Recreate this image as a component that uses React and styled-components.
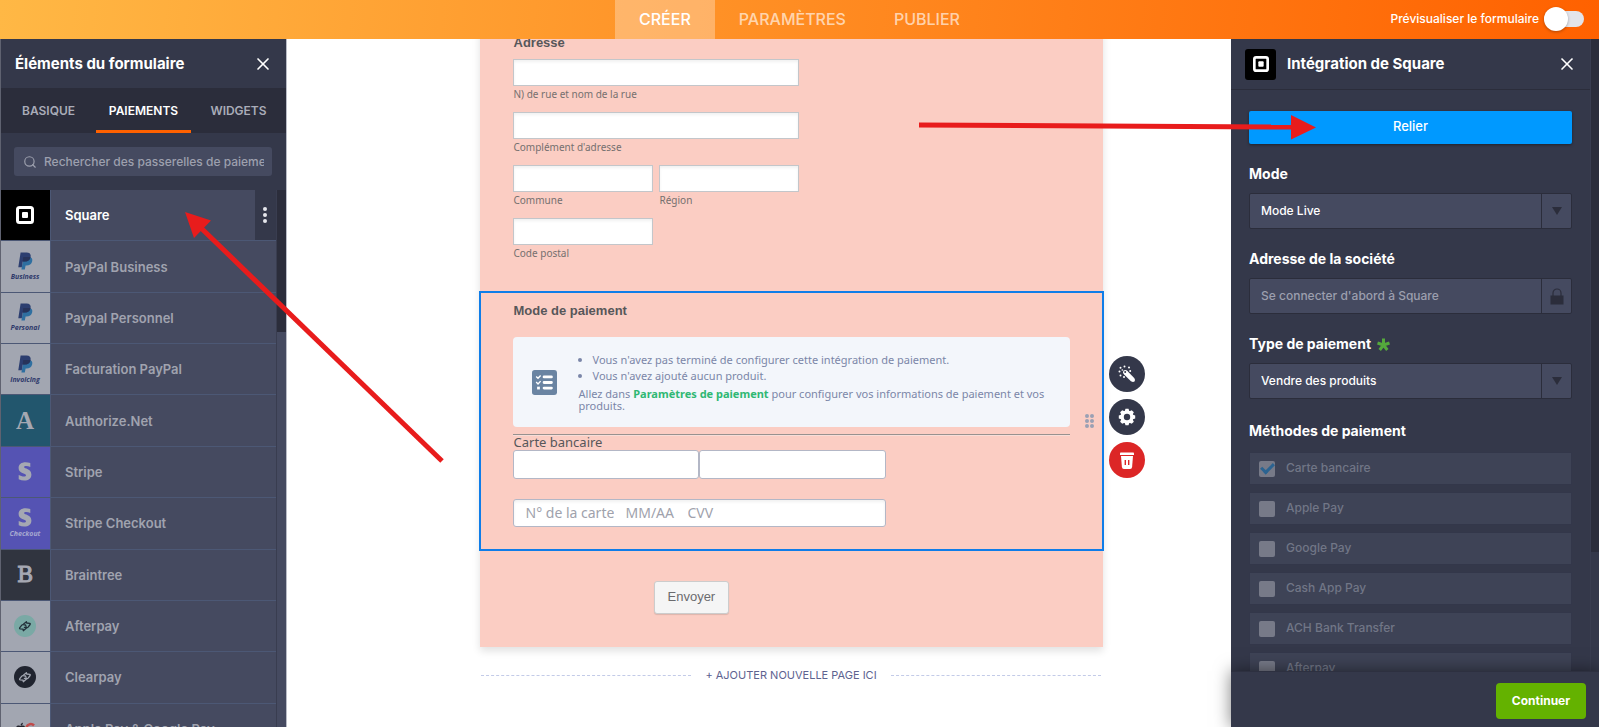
import React from 'react';
import styled, { createGlobalStyle, css } from 'styled-components';
import { FaApple } from 'react-icons/fa';
import { Search, X } from 'lucide-react';

const GlobalStyle = createGlobalStyle`
  * {
    box-sizing: border-box;
  }

  body {
    margin: 0;
    background: #fff;
    font-family: Inter, "Liberation Sans", sans-serif;
  }

  button, input, select {
    font-family: inherit;
    margin: 0;
  }
`;

const Page = styled.div`
  position: relative;
  height: 100vh;
  display: flex;
  flex-direction: column;
  overflow: hidden;
`;

/* top bar */

const TopBar = styled.header`
  height: 39px;
  flex: none;
  display: grid;
  grid-template-columns: 1fr auto 1fr;
  background: linear-gradient(95deg, #ffb845, #ff6100);
`;

const TopNav = styled.nav`
  grid-column: 2;
  display: flex;
`;

const TopLink = styled.a`
  display: flex;
  align-items: center;
  padding: 0 24px 2px;
  font-size: 16px;
  font-weight: 500;
  text-decoration: none;
  color: ${props => (props.$active ? '#fff' : 'rgba(255, 255, 255, 0.65)')};
  background: ${props => (props.$active ? 'rgba(255, 255, 255, 0.3)' : 'transparent')};
`;

const Preview = styled.label`
  display: flex;
  align-items: center;
  justify-content: flex-end;
  gap: 5px;
  padding: 0 15px 2px 0;
  font-size: 12px;
  font-weight: 500;
  color: #fff;
`;

const Toggle = styled.input`
  appearance: none;
  width: 40px;
  height: 16px;
  border-radius: 8px;
  background: #e3e4ea;
  display: flex;
  align-items: center;

  &::before {
    content: '';
    flex: none;
    width: 24px;
    height: 24px;
    border-radius: 50%;
    background: #fff;
    box-shadow: 0 1px 3px rgba(0, 0, 0, 0.3);
  }
`;

const Workspace = styled.div`
  flex: 1;
  min-height: 0;
  display: flex;
`;

/* left panel */

const Sidebar = styled.aside`
  width: 287px;
  flex: none;
  display: flex;
  flex-direction: column;
  border: solid #b9bcc6;
  border-width: 0 1px;
  border-left-color: #5f6270;
  background: #34384a;
  color: #fff;
`;

const SidebarTitle = styled.div`
  height: 49px;
  flex: none;
  display: flex;
  align-items: center;
  justify-content: space-between;
  padding: 0 13px 0 14px;
`;

const Heading = styled.h2`
  margin: 0;
  font-size: 15px;
  line-height: 20px;
  font-weight: 700;
`;

const IconButton = styled.button`
  display: flex;
  padding: 0;
  border: 0;
  background: none;
  color: #fff;
`;

const Tabs = styled.div`
  height: 45px;
  flex: none;
  display: flex;
  background: #2b2d3b;
`;

const Tab = styled.button`
  flex: 1;
  padding: 3px 0 0;
  border: 0;
  border-bottom: 3px solid ${props => (props.$active ? '#ff6100' : 'transparent')};
  background: none;
  font-size: 12px;
  font-weight: 600;
  color: ${props => (props.$active ? '#fff' : '#a9acb8')};
`;

const SearchBox = styled.label`
  height: 29px;
  flex: none;
  display: flex;
  align-items: center;
  gap: 7px;
  margin: 14px;
  margin-left: 13px;
  padding: 0 8px 0 9px;
  border-radius: 3px;
  background: #454a60;
  color: #9da0ae;
`;

const SearchInput = styled.input`
  flex: 1;
  min-width: 0;
  padding: 0;
  border: 0;
  outline: 0;
  background: none;
  font-size: 12px;
  font-weight: 500;
  color: #fff;

  &::placeholder {
    color: #9da0ae;
    opacity: 1;
  }
`;

const ListArea = styled.div`
  flex: 1;
  min-height: 0;
  display: flex;
  overflow: hidden;
`;

const ElementList = styled.ul`
  flex: 1;
  min-height: 565px;
  align-self: flex-start;
  display: grid;
  grid-auto-rows: 1fr;
  margin: 0;
  padding: 0;
  list-style: none;
`;

const ElementRow = styled.li`
  display: flex;
  border-bottom: 1px solid #4c5875;
  background: #454a60;
`;

const ElementButton = styled.button`
  flex: 1;
  display: flex;
  align-items: center;
  padding: 0;
  border: 0;
  background: none;
  text-align: left;
  font-size: 13px;
  font-weight: 600;
  color: ${props => (props.$active ? '#fff' : '#a0a3af')};
`;

const Tile = styled.span`
  width: 50px;
  align-self: stretch;
  flex: none;
  display: flex;
  flex-direction: column;
  align-items: center;
  justify-content: center;
  margin-right: 14px;
  padding-right: 1px;
  border-right: 1px solid #4c5875;
  background: ${props => props.$bg};
`;

const TileCaption = styled.span`
  margin-top: 2px;
  font: italic 700 7px/9px "Open Sans", sans-serif;
  color: ${props => props.$color};
`;

const TileLetter = styled.span`
  font: ${props => props.$font};
  -webkit-text-stroke: ${props => (props.$stroke ? '1px #a5a8b2' : '0')};
  color: #a5a8b2;
`;

const MoreButton = styled.button`
  width: 21px;
  padding: 0 2px 0 0;
  border: 0;
  display: flex;
  align-items: center;
  justify-content: center;
  background: #34384a;
`;

const ScrollTrack = styled.div`
  width: ${props => props.$width}px;
  flex: none;
  border-left: 1px solid #393d50;
  background: ${props => props.$bg};
`;

const ScrollThumb = styled.div`
  height: ${props => props.$height}px;
  background: #2b2d3b;
`;

/* form */

const Canvas = styled.main`
  flex: 1;
  min-width: 0;
  display: flex;
  flex-direction: column;
  align-items: center;
  padding-left: 64px;
  overflow: hidden;
`;

const Sheet = styled.form`
  width: 623px;
  margin-top: -16px;
  background: #fbcdc3;
  box-shadow: 0 4px 8px rgba(0, 0, 0, 0.12);
  font-family: "Noto Sans", sans-serif;
`;

const AddressField = styled.section`
  padding: 12px 304px 31px 33px;
`;

const FieldTitle = styled.h3`
  margin: 0;
  padding-left: 1px;
  font: 700 13px/16px "Liberation Sans", Arial, sans-serif;
  color: #57575a;
`;

const AddressGrid = styled.div`
  display: grid;
  grid-template-columns: 1fr 1fr;
  gap: 11px 6px;
  margin-top: 8px;
`;

const SubField = styled.label`
  grid-column: ${props => (props.$wide ? 'span 2' : 'auto')};
  display: flex;
  flex-direction: column;
  gap: 2px;
  font: 10px/13px "Noto Sans", sans-serif;
  color: #75706f;

  span {
    padding-left: 1px;
  }
`;

const inputLook = css`
  min-width: 0;
  border: 1px solid #c3c6ca;
  background: #fff;
  box-shadow: inset 0 2px 3px rgba(0, 0, 0, 0.06);
`;

const TextInput = styled.input`
  ${inputLook}
  width: 100%;
  height: 27px;
  padding: 0 8px;
`;

const PaymentField = styled.section`
  position: relative;
  margin: 0 -1px;
  padding: 10px 32px 22px;
  border: 2px solid #0f7de8;
`;

const Notice = styled.div`
  display: flex;
  align-items: center;
  gap: 22px;
  min-height: 90px;
  margin-top: 18px;
  padding: 0 14px 0 19px;
  border-radius: 4px;
  background: #f3f6fb;
  color: #7b86a8;
  font: 11px/12px "Noto Sans", sans-serif;

  ul {
    margin: 0 0 4px;
    padding-left: 14px;
    line-height: 16px;
  }

  p {
    margin: 0;
  }

  a {
    font-weight: 700;
    color: #2fb873;
    text-decoration: none;
  }
`;

const Rule = styled.hr`
  margin: 7px 0 0;
  border: 0;
  border-top: 1px solid #98918f;
  border-bottom: 1px solid #f7ddd8;
`;

const CardFields = styled.fieldset`
  width: 373px;
  margin: 0;
  padding: 0;
  border: 0;
  min-width: 0;
`;

const CardLegend = styled.legend`
  padding: 0 0 2px 1px;
  font: 13px/12px "Noto Sans", sans-serif;
  color: #57575a;
`;

const NameRow = styled.div`
  display: grid;
  grid-template-columns: 1fr 1fr;
  margin-bottom: 20px;
`;

const NameInput = styled.input`
  ${inputLook}
  height: 29px;
  border-color: #b3b7c6;
  border-radius: 3px;
  box-shadow: none;
`;

const CardRow = styled.div`
  ${inputLook}
  height: 28px;
  display: flex;
  align-items: center;
  gap: 12px;
  padding: 0 12px;
  border-color: #b3b7c6;
  border-radius: 3px;
`;

const CardInput = styled.input`
  width: ${props => props.$width}px;
  padding: 0;
  border: 0;
  outline: 0;
  background: none;
  font: 14px/18px "Noto Sans", sans-serif;

  &::placeholder {
    color: #a0a2ac;
    opacity: 1;
  }
`;

const DragHandle = styled.svg`
  position: absolute;
  right: 7px;
  top: 121px;
`;

const FieldActions = styled.div`
  position: absolute;
  left: calc(100% + 7px);
  top: 63px;
  display: grid;
  gap: 7px;
`;

const RoundButton = styled.button`
  width: 36px;
  height: 36px;
  display: flex;
  align-items: center;
  justify-content: center;
  padding: 0;
  border: 0;
  border-radius: 50%;
  background: ${props => (props.$danger ? '#dc2626' : '#34384a')};
`;

const SubmitRow = styled.div`
  padding: 30px 0 33px 174px;
`;

const SubmitButton = styled.button`
  height: 33px;
  padding: 0 13px 2px;
  border: 1px solid #ccc;
  border-radius: 3px;
  box-shadow: 0 1px 1px rgba(0, 0, 0, 0.12);
  background: #f5f5f5;
  font: 13px/18px "Liberation Sans", Arial, sans-serif;
  color: #6b6b6e;
`;

const NewPage = styled.div`
  width: 620px;
  display: flex;
  align-items: center;
  margin-top: 20px;

  &::before, &::after {
    content: '';
    flex: 1;
    border-top: 1px dashed #c3cbe8;
  }
`;

const NewPageButton = styled.button`
  padding: 0 14px;
  border: 0;
  background: none;
  font-size: 11px;
  line-height: 16px;
  color: #5e6390;
`;

/* right panel */

const Settings = styled.aside`
  width: 368px;
  flex: none;
  display: flex;
  flex-direction: column;
  background: #34384a;
  color: #fff;
`;

const SettingsBody = styled.div`
  flex: 1;
  min-height: 0;
  display: flex;
  overflow: hidden;
`;

const SettingsColumn = styled.div`
  flex: 1;
  min-width: 0;
`;

const SettingsTitle = styled.div`
  height: 51px;
  display: flex;
  align-items: center;
  gap: 11px;
  padding: 0 13px 0 14px;
  border-bottom: 1px solid #2b2d3b;

  button {
    margin-left: auto;
  }
`;

const SquareBadge = styled.span`
  width: 31px;
  height: 31px;
  display: flex;
  align-items: center;
  justify-content: center;
  border-radius: 3px;
  background: #000;
`;

const SettingsForm = styled.div`
  display: flex;
  flex-direction: column;
  padding: 21px 18px 0;
`;

const ConnectButton = styled.button`
  height: 33px;
  padding: 0 0 3px;
  border: 0;
  border-radius: 2px;
  background: #0099ff;
  box-shadow: 0 1px 3px rgba(0, 0, 0, 0.4);
  font-size: 13px;
  font-weight: 500;
  color: #fff;
`;

const SettingLabel = styled.label`
  display: flex;
  align-items: center;
  gap: 6px;
  margin-top: 21px;
  font-size: 14px;
  line-height: 18px;
  font-weight: 700;
`;

const ControlBox = styled.div`
  height: 36px;
  display: flex;
  margin-top: 10px;
  border: 1px solid #2b2d3b;
  border-radius: 2px;
  background: #454a60;

  select, input {
    appearance: none;
    flex: 1;
    min-width: 0;
    padding: 0 11px 2px;
    border: 0;
    border-right: 1px solid #2b2d3b;
    background: none;
    font-size: 12px;
    font-weight: 500;
    color: #fff;
    opacity: 1;
  }

  input::placeholder {
    color: #9c9fae;
    opacity: 1;
  }
`;

const ControlIcon = styled.span`
  width: 29px;
  display: flex;
  align-items: center;
  justify-content: center;
`;

const Methods = styled.fieldset`
  display: grid;
  gap: 7px;
  margin: 23px 0 0;
  padding: 0;
  border: 0;
`;

const MethodsLegend = styled.legend`
  margin-bottom: 12px;
  padding: 0;
  font-size: 14px;
  line-height: 18px;
  font-weight: 700;
`;

const Method = styled.label`
  height: 33px;
  display: flex;
  align-items: center;
  gap: 11px;
  padding: 0 9px;
  border: 1px solid #33374a;
  background: #3e4356;
  font-size: 12px;
  font-weight: 500;
  color: #717686;

  span {
    padding-bottom: 2px;
  }
`;

const MethodCheck = styled.input`
  appearance: none;
  width: 16px;
  height: 16px;
  display: grid;
  place-items: center;
  border-radius: 2px;
  background: #777a88;

  &:checked::before {
    content: '';
    width: 10px;
    height: 5px;
    margin-top: -3px;
    border: solid #2b6391;
    border-width: 0 0 3px 3px;
    transform: rotate(-45deg);
  }
`;

const SettingsFooter = styled.div`
  position: relative;
  height: 56px;
  flex: none;
  display: flex;
  align-items: center;
  justify-content: flex-end;
  padding: 2px 13px 0 0;
  border-top: 1px solid #2d3040;
  background: #34384a;
  box-shadow: 0 0 16px rgba(0, 0, 0, 0.5);
`;

const ContinueButton = styled.button`
  width: 90px;
  height: 36px;
  border: 0;
  border-radius: 4px;
  background: #64b200;
  font-size: 12px;
  font-weight: 700;
  color: #fff;
`;

const Arrows = styled.svg`
  position: absolute;
  top: 0;
  left: 0;
  overflow: visible;
  pointer-events: none;
`;

const SquareLogo = ({ size }) => (
  <svg width={size} height={size} viewBox="0 0 18 18">
    <rect x="1.5" y="1.5" width="15" height="15" rx="2" fill="none" stroke="#fff" strokeWidth="3" />
    <rect x="6" y="6" width="6" height="6" rx="1" fill="#fff" />
  </svg>
);

const PaypalLogo = () => (
  <svg width="15" height="18" viewBox="0 0 15 18">
    <path d="M5.6 5h5.7c2.7.2 3.4 2.1 2.9 4.2-.7 3.2-2.8 4.2-5.7 4.2h-.9L6.8 17.6H3.4z" fill="#2f6fa0" />
    <path d="M2.6.4h6c3 0 4.500 1.500 4 4.500-.6 3.400-2.800 4.700-6 4.700H4.700l-.9 5.700H.3z" fill="#2c3e70" />
    <path d="M5.300 5h6.100c.4 0 .8.1 1.100.3-.7 3-2.800 4.300-5.900 4.300H4.700z" fill="#27335a" />
  </svg>
);

const StripeLogo = () => (
  <svg width="14" height="19" viewBox="0 0 14 19">
    <path d="M12.300.9v4.200C11 4.400 9.500 4 8.200 4 7 4 6.100 4.300 6.100 5c0 2 7.300 1.300 7.300 7.400 0 4-3 6-7.200 6-1.900 0-3.800-.4-5.500-1.200v-4.300c1.600.9 3.700 1.500 5.400 1.500 1.100 0 1.900-.3 1.900-1.200C8 11 .6 11.900.6 5.900.6 2.400 3.400.3 7.600.3c1.600 0 3.200.2 4.700.6z" fill="#a5a8b2" />
  </svg>
);

const LoopLogo = ({ bg, fg }) => (
  <svg width="22" height="22" viewBox="0 0 22 22">
    <circle cx="11" cy="11" r="11" fill={bg} />
    <g fill="none" stroke={fg} strokeWidth="1.3" strokeLinejoin="round" strokeLinecap="round">
      <path d="M9.600 8.900l2.800-2.200.3 1.300 3 .4q.9.3.4 1.100l-2 2.700q-.6.700-1.500.5l-2.200-.3" />
      <path d="M12.200 13.200l-2.900 2.500-.2-1.500-2.900-.3q-1-.3-.4-1.200l2-2.500q.6-.7 1.500-.5l2.200.3.600 1.500" />
    </g>
  </svg>
);

const DownArrow = () => (
  <svg width="10" height="8" viewBox="0 0 10 8">
    <path d="M0 0h10L5 8z" fill="#2b2d3b" />
  </svg>
);

const LockIcon = () => (
  <svg width="14" height="17" viewBox="0 0 14 17">
    <path d="M3 8V5a4 4 0 0 1 8 0v3" fill="none" stroke="#2b2d3b" strokeWidth="1.2" />
    <rect x="0.5" y="7.5" width="13" height="9" fill="#2b2d3b" />
  </svg>
);

const RequiredMark = () => (
  <svg width="13" height="13" viewBox="0 0 13 13">
    <path d="M6.500 7V.5M6.500 7l-6-2M6.500 7l6-2M6.500 7l-3.800 5M6.500 7l3.800 5" stroke="#54a93c" strokeWidth="3" />
  </svg>
);

const ChecklistIcon = () => (
  <svg width="27" height="27" viewBox="0 0 27 27">
    <rect width="27" height="27" rx="3" fill="#6a84a2" />
    <path d="M13 7.500h8M13 13.500h8M13 19.500h8" stroke="#fff" strokeWidth="3" strokeLinecap="round" />
    <path d="M4.500 7l2 2 2.800-3M4.500 13l2 2 2.800-3" fill="none" stroke="#fff" strokeWidth="1.5" />
    <rect x="5.500" y="18" width="3" height="3" fill="#fff" />
  </svg>
);

const WandIcon = () => (
  <svg width="18" height="18" viewBox="0 0 18 18">
    <path d="M7.500 7.500l7.300 7.300" stroke="#fff" strokeWidth="4.600" />
    <circle cx="7.300" cy="7.300" r="2.300" fill="#fff" />
    <circle cx="15" cy="15" r="2" fill="#fff" />
    <circle cx="7.200" cy="7" r="1" fill="#34384a" />
    <g fill="#fff">
      <circle cx="6.500" cy="1.500" r="1" />
      <circle cx="11" cy="2.500" r="1" />
      <circle cx="2.500" cy="2.800" r="1" />
      <circle cx="1.500" cy="6.600" r="1" />
      <circle cx="2.500" cy="10.500" r="1" />
      <circle cx="6" cy="12" r="1" />
      <circle cx="12.200" cy="6" r="1" />
      <circle cx="4.300" cy="5" r="0.800" />
    </g>
  </svg>
);

const GearIcon = () => (
  <svg width="18" height="18" viewBox="0 0 18 18">
    {[0, 45, 90, 135].map(angle => (
      <path key={angle} d="M7.500.8h3l1 3v10.400l-1 3h-3l-1-3V3.800z" fill="#fff" transform={`rotate(${angle} 9 9)`} />
    ))}
    <circle cx="9" cy="9" r="6.500" fill="#fff" />
    <circle cx="9" cy="9" r="3.200" fill="#34384a" />
  </svg>
);

const TrashIcon = () => (
  <svg width="14" height="17" viewBox="0 0 14 17">
    <path d="M0 1.500Q0 .5.800.5h12.400q.8 0 .8.900V3H0z" fill="#fff" />
    <path d="M1 4h12l-.9 11q-.2 2-2 2H3.900q-1.800 0-2-2z" fill="#fff" />
    <path d="M5.300 8v5M8.700 8v5" stroke="#dc2626" strokeWidth="1.4" />
  </svg>
);

const WalletLogo = () => (
  <svg width="22" height="14" viewBox="0 0 22 14">
    <FaApple x="0" y="0" width="10" height="12" color="#23242e" />
    <path d="M20 3.500A4.500 4.500 0 0 0 12.500 5" fill="none" stroke="#c04a4a" strokeWidth="2.600" />
    <path d="M12.500 5a4.500 4.500 0 0 0 1 5" fill="none" stroke="#b78e36" strokeWidth="2.600" />
    <path d="M13.500 10a4.500 4.500 0 0 0 7-3H17" fill="none" stroke="#3d6fa8" strokeWidth="2.200" />
  </svg>
);

const Dots = ({ columns, color, gap, radius }) => (
  <g fill={color}>
    {Array.from({ length: columns * 3 }, (_, i) => (
      <circle
        key={i}
        cx={radius + (i % columns) * gap}
        cy={radius + Math.floor(i / columns) * gap}
        r={radius}
      />
    ))}
  </g>
);

const LIGHT = '#a2a6b1';
const NAVY = '#2f3a6b';

const elements = [
  { name: 'Square', bg: '#000', icon: <SquareLogo size={18} />, active: true },
  { name: 'PayPal Business', bg: LIGHT, icon: <PaypalLogo />, caption: 'Business', color: NAVY },
  { name: 'Paypal Personnel', bg: LIGHT, icon: <PaypalLogo />, caption: 'Personal', color: NAVY },
  { name: 'Facturation PayPal', bg: LIGHT, icon: <PaypalLogo />, caption: 'Invoicing', color: NAVY },
  { name: 'Authorize.Net', bg: '#22566d', icon: <TileLetter $font={'700 25px/28px "Liberation Serif", serif'}>A</TileLetter> },
  { name: 'Stripe', bg: '#5553b3', icon: <StripeLogo /> },
  { name: 'Stripe Checkout', bg: '#5553b3', icon: <StripeLogo />, caption: 'Checkout', color: '#a5a8d0' },
  { name: 'Braintree', bg: '#30343f', icon: <TileLetter $stroke $font={'400 22px/26px "DejaVu Serif", serif'}>B</TileLetter> },
  { name: 'Afterpay', bg: LIGHT, icon: <LoopLogo bg="#7aa9a5" fg="#23303a" /> },
  { name: 'Clearpay', bg: LIGHT, icon: <LoopLogo bg="#20242f" fg="#a2a6b1" /> },
  { name: 'Apple Pay & Google Pay', bg: LIGHT, icon: <WalletLogo /> },
];

const methods = ['Carte bancaire', 'Apple Pay', 'Google Pay', 'Cash App Pay', 'ACH Bank Transfer', 'Afterpay'];

const ElementsPanel = () => (
  <Sidebar>
    <SidebarTitle>
      <Heading>Éléments du formulaire</Heading>
      <IconButton aria-label="Fermer"><X size={20} strokeWidth={2} /></IconButton>
    </SidebarTitle>
    <Tabs>
      <Tab>BASIQUE</Tab>
      <Tab $active>PAIEMENTS</Tab>
      <Tab>WIDGETS</Tab>
    </Tabs>
    <SearchBox>
      <Search size={14} strokeWidth={2} />
      <SearchInput type="text" placeholder="Rechercher des passerelles de paiement" />
    </SearchBox>
    <ListArea>
      <ElementList>
        {elements.map(item => (
          <ElementRow key={item.name}>
            <ElementButton $active={item.active}>
              <Tile $bg={item.bg}>
                {item.icon}
                {item.caption && <TileCaption $color={item.color}>{item.caption}</TileCaption>}
              </Tile>
              {item.name}
            </ElementButton>
            {item.active && (
              <MoreButton aria-label="Plus">
                <svg width="4" height="16"><Dots columns={1} color="#e6e7ec" gap={6} radius={2} /></svg>
              </MoreButton>
            )}
          </ElementRow>
        ))}
      </ElementList>
      <ScrollTrack $width={10} $bg="#454a60"><ScrollThumb $height={142} /></ScrollTrack>
    </ListArea>
  </Sidebar>
);

const FormCanvas = () => (
  <Canvas>
    <Sheet>
      <AddressField>
        <FieldTitle>Adresse</FieldTitle>
        <AddressGrid>
          <SubField $wide><TextInput /><span>N) de rue et nom de la rue</span></SubField>
          <SubField $wide><TextInput /><span>Complément d'adresse</span></SubField>
          <SubField><TextInput /><span>Commune</span></SubField>
          <SubField><TextInput /><span>Région</span></SubField>
          <SubField><TextInput /><span>Code postal</span></SubField>
        </AddressGrid>
      </AddressField>
      <PaymentField>
        <FieldTitle>Mode de paiement</FieldTitle>
        <Notice>
          <ChecklistIcon />
          <div>
            <ul>
              <li>Vous n'avez pas terminé de configurer cette intégration de paiement.</li>
              <li>Vous n'avez ajouté aucun produit.</li>
            </ul>
            <p>
              Allez dans <a href="#parametres">Paramètres de paiement</a> pour configurer vos informations de paiement et vos produits.
            </p>
          </div>
        </Notice>
        <Rule />
        <CardFields>
          <CardLegend>Carte bancaire</CardLegend>
          <NameRow>
            <NameInput aria-label="Prénom" />
            <NameInput aria-label="Nom" />
          </NameRow>
          <CardRow>
            <CardInput $width={88} aria-label="Numéro de la carte" placeholder="N° de la carte" />
            <CardInput $width={50} aria-label="Expiration" placeholder="MM/AA" />
            <CardInput $width={40} aria-label="Code de sécurité" placeholder="CVV" />
          </CardRow>
        </CardFields>
        <DragHandle width="10" height="16"><Dots columns={2} color="#9aa0b4" gap={5} radius={2} /></DragHandle>
        <FieldActions>
          <RoundButton type="button" aria-label="Assistant"><WandIcon /></RoundButton>
          <RoundButton type="button" aria-label="Réglages"><GearIcon /></RoundButton>
          <RoundButton type="button" aria-label="Supprimer" $danger><TrashIcon /></RoundButton>
        </FieldActions>
      </PaymentField>
      <SubmitRow>
        <SubmitButton type="button">Envoyer</SubmitButton>
      </SubmitRow>
    </Sheet>
    <NewPage>
      <NewPageButton>+ AJOUTER NOUVELLE PAGE ICI</NewPageButton>
    </NewPage>
  </Canvas>
);

const SettingsPanel = () => (
  <Settings>
    <SettingsBody>
      <SettingsColumn>
        <SettingsTitle>
          <SquareBadge><SquareLogo size={16} /></SquareBadge>
          <Heading>Intégration de Square</Heading>
          <IconButton aria-label="Fermer"><X size={20} strokeWidth={2} /></IconButton>
        </SettingsTitle>
        <SettingsForm>
          <ConnectButton>Relier</ConnectButton>
          <SettingLabel htmlFor="mode">Mode</SettingLabel>
          <ControlBox>
            <select id="mode"><option>Mode Live</option></select>
            <ControlIcon><DownArrow /></ControlIcon>
          </ControlBox>
          <SettingLabel htmlFor="location">Adresse de la société</SettingLabel>
          <ControlBox>
            <input id="location" placeholder="Se connecter d'abord à Square" disabled />
            <ControlIcon><LockIcon /></ControlIcon>
          </ControlBox>
          <SettingLabel htmlFor="type">Type de paiement <RequiredMark /></SettingLabel>
          <ControlBox>
            <select id="type"><option>Vendre des produits</option></select>
            <ControlIcon><DownArrow /></ControlIcon>
          </ControlBox>
          <Methods>
            <MethodsLegend>Méthodes de paiement</MethodsLegend>
            {methods.map((name, i) => (
              <Method key={name}>
                <MethodCheck type="checkbox" defaultChecked={i === 0} disabled />
                <span>{name}</span>
              </Method>
            ))}
          </Methods>
        </SettingsForm>
      </SettingsColumn>
      <ScrollTrack $width={9} $bg="#34384a"><ScrollThumb $height={513} /></ScrollTrack>
    </SettingsBody>
    <SettingsFooter>
      <ContinueButton>Continuer</ContinueButton>
    </SettingsFooter>
  </Settings>
);

const App = () => (
  <Page>
    <GlobalStyle />
    <TopBar>
      <TopNav>
        <TopLink href="#creer" $active>CRÉER</TopLink>
        <TopLink href="#parametres">PARAMÈTRES</TopLink>
        <TopLink href="#publier">PUBLIER</TopLink>
      </TopNav>
      <Preview>
        Prévisualiser le formulaire
        <Toggle type="checkbox" role="switch" />
      </Preview>
    </TopBar>
    <Workspace>
      <ElementsPanel />
      <FormCanvas />
      <SettingsPanel />
    </Workspace>
    <Arrows width="1" height="1">
      <g fill="#e81c1c" stroke="#e81c1c">
        <path d="M442 461L200 227" strokeWidth="5" />
        <path d="M185 212l26 8.500L194 238z" stroke="none" />
        <path d="M919 125l374 2" strokeWidth="5" />
        <path d="M1316 127.500L1291 115v24.500z" stroke="none" />
      </g>
    </Arrows>
  </Page>
);

export default App;
